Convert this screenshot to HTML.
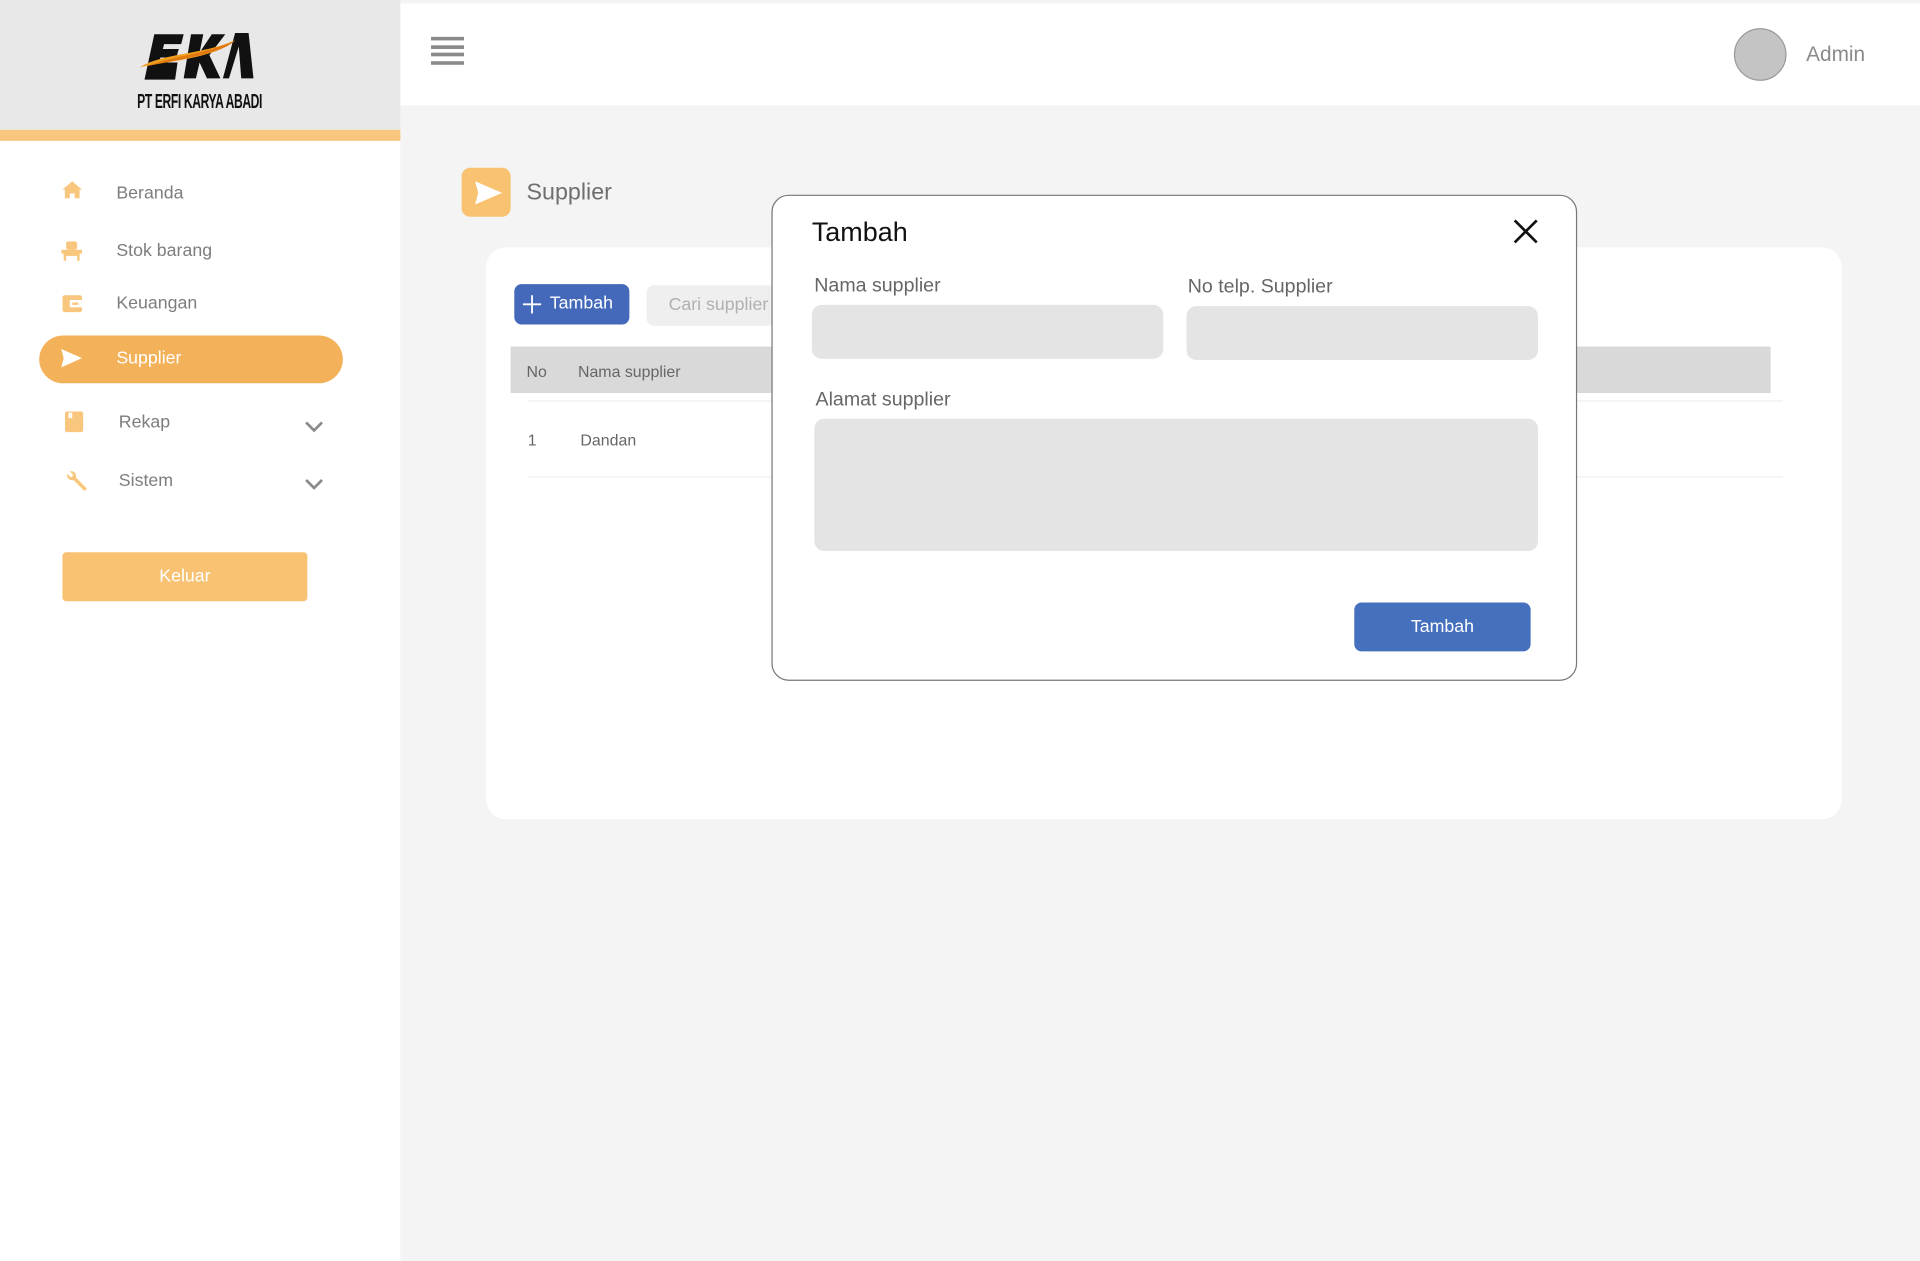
<!DOCTYPE html>
<html><head><meta charset="utf-8"><style>
*{box-sizing:border-box;margin:0;padding:0}
html,body{width:1920px;height:1261px;overflow:hidden;background:#f4f4f4;font-family:"Liberation Sans",Arial,sans-serif}
#w{position:absolute;left:0;top:0;width:1568px;height:1030px;transform:scale(1.22449);transform-origin:0 0;background:#f4f4f4}
.a{position:absolute}
.side{left:0;top:0;width:327px;height:1030px;background:#fff}
.nav{font-size:14.5px;color:#7d7d7d}
.inp{background:#e4e4e4;border-radius:8px}
.lbl{font-size:16px;color:#666}
</style></head><body><div id="w">
<div class="a side"></div>
<div class="a" style="left:0;top:0;width:327px;height:106px;background:#e8e8e8"></div>
<div class="a" style="left:0;top:106px;width:327px;height:9px;background:#f8c67c"></div>
<!-- logo -->
<div class="a" style="left:112px;top:25px;width:105px;height:44px">
<svg width="105" height="44" viewBox="0 0 105 44">
<path d="M14 3h24l-2 8h-14l-1 4h13l-2 7h-13l-1 4h15l-2 14h-25z" fill="#111"/>
<path d="M44 3h10l-3 15 10-15h11l-13 17 9 19h-11l-6-13-3 13h-10z" fill="#111"/>
<path d="M80 2h11l4 37h-10l-2-26-8 26h-5z" fill="#111"/>
<path d="M2 30c20-12 50-10 78-22c-8 8-30 14-50 17c-12 2-20 3-28 5z" fill="#f0a020"/>
<path d="M8 29c20-8 45-9 72-21c-10 10-35 14-72 21z" fill="#e07a10"/>
</svg></div>
<div class="a" style="left:112px;top:73px;font-weight:bold;font-size:13px;letter-spacing:-0.4px;color:#111;transform:scale(0.76,1.25);transform-origin:0 0;white-space:nowrap">PT ERFI KARYA ABADI</div>
<!-- nav -->
<svg class="a" style="left:51px;top:148px" width="16" height="14" viewBox="0 0 16 14"><path d="M8 0L0 7h2v7h4v-4h4v4h4V7h2z" fill="#f8c67c"/></svg>
<div class="a nav" style="left:95px;top:150px">Beranda</div>
<svg class="a" style="left:50px;top:197px" width="17" height="16" viewBox="0 0 17 16"><rect x="4" y="0" width="9" height="7" rx="2" fill="#f8c67c"/><rect x="0" y="7" width="17" height="3" fill="#f8c67c"/><rect x="2" y="10" width="13" height="2" fill="#f8c67c"/><rect x="2" y="10" width="2" height="6" fill="#f8c67c"/><rect x="13" y="10" width="2" height="6" fill="#f8c67c"/></svg>
<div class="a nav" style="left:95px;top:197px">Stok barang</div>
<svg class="a" style="left:51px;top:241px" width="16" height="14" viewBox="0 0 16 14"><rect width="16" height="14" rx="2" fill="#f8c67c"/><rect x="6" y="4" width="10" height="6" fill="#fff"/><rect x="8" y="6" width="5" height="2" fill="#f8c67c"/></svg>
<div class="a nav" style="left:95px;top:240px">Keuangan</div>
<div class="a" style="left:32px;top:274px;width:248px;height:39px;border-radius:20px;background:#f3b25a"></div>
<svg class="a" style="left:50px;top:285px" width="17" height="15" viewBox="0 0 17 15"><path d="M0 0L17 7.5L0 15L2 7.5z M2 6.5h8v2H2z" fill="#fff"/></svg>
<div class="a nav" style="left:95px;top:285px;color:#fff">Supplier</div>
<svg class="a" style="left:53px;top:336px" width="15" height="17" viewBox="0 0 15 17"><rect width="15" height="17" rx="2" fill="#f8c67c"/><path d="M3 1v5l1.5-1 1.5 1V1z" fill="#fff"/></svg>
<div class="a nav" style="left:97px;top:337px">Rekap</div>
<svg class="a" style="left:248px;top:343px" width="17" height="11" viewBox="0 0 17 11"><path d="M2 2l6.5 6.5L15 2" stroke="#8a8a8a" stroke-width="2.2" fill="none"/></svg>
<svg class="a" style="left:53px;top:384px" width="19" height="19" viewBox="0 0 19 19"><path d="M2 3a4 4 0 0 0 5 5l9 9 2-2-9-9a4 4 0 0 0-5-5l3 3-2 2z" fill="#f8c67c"/></svg>
<div class="a nav" style="left:97px;top:385px">Sistem</div>
<svg class="a" style="left:248px;top:390px" width="17" height="11" viewBox="0 0 17 11"><path d="M2 2l6.5 6.5L15 2" stroke="#8a8a8a" stroke-width="2.2" fill="none"/></svg>
<div class="a" style="left:51px;top:451px;width:200px;height:40px;border-radius:3px;background:#f8c272;color:#fff;font-size:14.5px;text-align:center;line-height:40px">Keluar</div>
<!-- topbar -->
<div class="a" style="left:327px;top:3px;width:1241px;height:83px;background:#fff"></div>
<svg class="a" style="left:352px;top:30px" width="27" height="23" viewBox="0 0 27 23"><g fill="#8a8a8a"><rect y="0" width="27" height="3"/><rect y="7" width="27" height="3"/><rect y="13" width="27" height="3"/><rect y="20" width="27" height="3"/></g></svg>
<div class="a" style="left:1416px;top:23px;width:43px;height:43px;border-radius:50%;background:#c4c4c4;border:1px solid #999"></div>
<div class="a" style="left:1475px;top:35px;font-size:17px;color:#8a8a8a">Admin</div>
<!-- page title -->
<div class="a" style="left:377px;top:137px;width:40px;height:40px;border-radius:7px;background:#f9c270"></div>
<svg class="a" style="left:388px;top:148px" width="22" height="19" viewBox="0 0 22 19"><path d="M0 0L22 9.5L0 19L2.5 9.5z M2.5 8.3h10v2.4h-10z" fill="#fff"/></svg>
<div class="a" style="left:430px;top:147px;font-size:19px;color:#6e6e6e">Supplier</div>
<!-- card -->
<div class="a" style="left:397px;top:202px;width:1107px;height:467px;background:#fff;border-radius:16px"></div>
<div class="a" style="left:420px;top:232px;width:94px;height:33px;border-radius:6px;background:#4569ba;color:#fff;font-size:14.5px;line-height:33px;padding-left:29px">Tambah</div>
<svg class="a" style="left:427px;top:241px" width="15" height="15" viewBox="0 0 15 15"><path d="M7.5 0v15M0 7.5h15" stroke="#fff" stroke-width="1.5"/></svg>
<div class="a" style="left:528px;top:233px;width:120px;height:33px;border-radius:6px;background:#efefef;color:#b0b0b0;font-size:14.5px;line-height:33px;padding-left:18px">Cari supplier</div>
<div class="a" style="left:417px;top:283px;width:1029px;height:38px;background:#d9d9d9"></div>
<div class="a" style="left:430px;top:296px;font-size:13px;color:#666">No</div>
<div class="a" style="left:472px;top:296px;font-size:13px;color:#666">Nama supplier</div>
<div class="a" style="left:431px;top:327px;width:1025px;height:1px;background:#eee"></div>
<div class="a" style="left:431px;top:352px;font-size:13px;color:#666">1</div>
<div class="a" style="left:474px;top:352px;font-size:13px;color:#666">Dandan</div>
<div class="a" style="left:431px;top:389px;width:1025px;height:1px;background:#eee"></div>
<!-- modal -->
<div class="a" style="left:630px;top:159px;width:658px;height:397px;background:#fff;border:1px solid #777;border-radius:14px"></div>
<div class="a" style="left:663px;top:177px;font-size:22px;color:#111">Tambah</div>
<svg class="a" style="left:1236px;top:179px" width="20" height="20" viewBox="0 0 20 20"><path d="M1 1l18 18M19 1L1 19" stroke="#111" stroke-width="2.2"/></svg>
<div class="a lbl" style="left:665px;top:225px">Nama supplier</div>
<div class="a inp" style="left:663px;top:249px;width:287px;height:44px"></div>
<div class="a lbl" style="left:970px;top:226px">No telp. Supplier</div>
<div class="a inp" style="left:969px;top:250px;width:287px;height:44px"></div>
<div class="a lbl" style="left:666px;top:318px">Alamat supplier</div>
<div class="a inp" style="left:665px;top:342px;width:591px;height:108px"></div>
<div class="a" style="left:1106px;top:492px;width:144px;height:40px;border-radius:6px;background:#4570bd;color:#fff;font-size:14.5px;text-align:center;line-height:40px">Tambah</div>
</div></body></html>
